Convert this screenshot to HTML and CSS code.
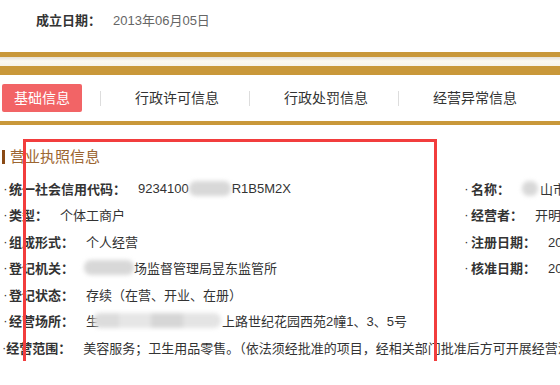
FILE: index.html
```html
<!DOCTYPE html>
<html lang="zh-CN">
<head>
  <meta charset="UTF-8">
  <meta name="viewport" content="width=device-width, initial-scale=1.0">
  <title>企业信息</title>
  <link rel="stylesheet" href="styles.css">
</head>
<body>
  <div class="page">
    <div class="founded">
      <span class="key">成立日期：</span><span class="val">2013年06月05日</span>
    </div>

    <div class="band"></div>

    <nav class="tabs">
      <span class="tab active">基础信息</span>
      <span class="sep"></span>
      <span class="tab">行政许可信息</span>
      <span class="sep"></span>
      <span class="tab">行政处罚信息</span>
      <span class="sep"></span>
      <span class="tab">经营异常信息</span>
    </nav>

    <section class="license">
      <h2 class="title">营业执照信息</h2>
      <div class="cols">
        <ul class="list left">
          <li><b>统一社会信用代码：</b>9234100<span class="blur b-code"></span>R1B5M2X</li>
          <li><b>类型：</b>个体工商户</li>
          <li><b>组成形式：</b>个人经营</li>
          <li><b>登记机关：</b><span class="blur b-org"></span>场监督管理局昱东监管所</li>
          <li><b>登记状态：</b>存续（在营、开业、在册）</li>
          <li><b>经营场所：</b>生<span class="blur b-addr"></span>上路世纪花园西苑2幢1、3、5号</li>
          <li><b>经营范围：</b>美容服务；卫生用品零售。（依法须经批准的项目，经相关部门批准后方可开展经营活动）</li>
        </ul>
        <ul class="list right">
          <li><b>名称：</b><span class="blur b-name"></span>山市</li>
          <li><b>经营者：</b>开明</li>
          <li><b>注册日期：</b>2013年06月05日</li>
          <li><b>核准日期：</b>2019年08月14日</li>
        </ul>
      </div>
      <div class="mark"></div>
    </section>
  </div>
</body>
</html>
```

FILE: styles.css
```css
:root {
  --gold: #c9983a;
  --text: #333333;
  --muted: #666666;
  --red: #f26466;
  --brown: #9c6530;
}

* {
  margin: 0;
  padding: 0;
  box-sizing: border-box;
}

body {
  font-family: "Liberation Sans", "Noto Sans CJK SC", sans-serif;
  font-size: 13px;
  color: var(--text);
  background: #ffffff;
  overflow: hidden;
}

.page {
  width: 1000px;
  white-space: nowrap;
}

/* top date row */
.founded {
  height: 52px;
  padding: 12px 0 0 36px;
  line-height: 18px;
}

.founded .key {
  font-weight: 700;
  margin-right: 12px;
}

.founded .val {
  color: var(--muted);
}

.band {
  height: 23px;
  background: linear-gradient(to bottom,
    var(--gold) 0 5px,
    #e6e1d6 5px,
    #fbf9f3 9px,
    #f7f3ea 14px,
    var(--gold) 14px 23px);
}

/* tabs */
.tabs {
  display: flex;
  align-items: center;
  height: 50px;
  border-bottom: 4px solid var(--gold);
  font-size: 14px;
}

.tab {
  width: 148px;
  padding-left: 34px;
  line-height: 28px;
  color: var(--text);
}

.tab.active {
  width: 80px;
  margin-left: 2px;
  margin-right: 18px;
  padding-left: 0;
  text-align: center;
  color: #ffffff;
  background: var(--red);
  border-radius: 2px;
}

.sep {
  width: 1px;
  height: 15px;
  background: #dddddd;
}

/* license block */
.license {
  position: relative;
  padding-top: 22px;
}

.title {
  display: flex;
  align-items: center;
  margin-left: 2px;
  font-size: 15px;
  font-weight: 400;
  line-height: 20px;
  color: var(--brown);
}

.title::before {
  content: "";
  width: 3px;
  height: 14px;
  margin-right: 5px;
  background: #8a4a16;
}

.cols {
  display: flex;
  margin-top: 8px;
}

.list {
  list-style: none;
}

.list li {
  display: flex;
  align-items: center;
  height: 26.5px;
}

.list li::before {
  content: "·";
  width: 7px;
  text-align: center;
  color: var(--text);
}

.list b {
  font-weight: 700;
  margin-right: 12px;
}

.left {
  width: 461px;
  padding-left: 2px;
}

.right {
  padding-left: 1px;
}

.right li::before {
  width: 9px;
}

/* masked fields */
.blur {
  display: inline-block;
  height: 15px;
  border-radius: 7px;
  background: #d8d8d8;
  filter: blur(2px);
}

.b-code {
  width: 42px;
  margin: 0 1px 0 0;
}

.b-org {
  width: 50px;
  margin: 0 0 0 -2px;
}

.b-addr {
  width: 128px;
  margin: 0 1px 0 -6px;
  background: linear-gradient(to right, #dcdcdc 0 20%, #e6e6e6 20% 45%, #d6d6d6 45% 70%, #e4e4e4 70%);
}

.b-name {
  width: 16px;
  margin-right: 2px;
}

/* red annotation frame over the block */
.mark {
  position: absolute;
  left: 23px;
  top: 14px;
  width: 414px;
  height: 225px;
  border: 3px solid #f23d3d;
}
```
